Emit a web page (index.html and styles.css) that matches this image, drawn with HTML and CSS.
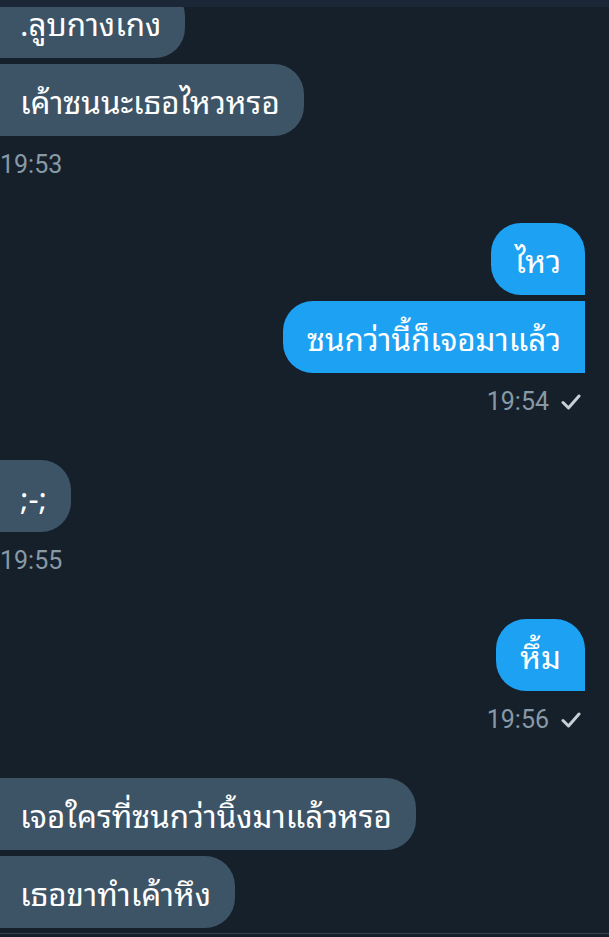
FILE: index.html
```html
<!DOCTYPE html>
<html lang="th">
<head>
<meta charset="utf-8">
<title>Messages</title>
<link rel="stylesheet" href="styles.css">
</head>
<body>
<div class="topbar"></div>
<main class="chat">
  <section class="group in first">
    <div class="bubble in-mid">.ลูบกางเกง</div>
    <div class="bubble in-last">เค้าซนนะเธอไหวหรอ</div>
    <div class="meta">19:53</div>
  </section>
  <section class="group out">
    <div class="bubble out-first">ไหว</div>
    <div class="bubble out-last">ซนกว่านี้ก็เจอมาแล้ว</div>
    <div class="meta">19:54 <svg class="check" viewBox="0 0 20 16" width="20" height="16"><path d="M2 8.5 L7.5 14 L18 2" fill="none" stroke="#c8cfd5" stroke-width="3" stroke-linecap="round" stroke-linejoin="round"/></svg></div>
  </section>
  <section class="group in">
    <div class="bubble in-single">;-;</div>
    <div class="meta">19:55</div>
  </section>
  <section class="group out">
    <div class="bubble out-single">หึ้ม</div>
    <div class="meta">19:56 <svg class="check" viewBox="0 0 20 16" width="20" height="16"><path d="M2 8.5 L7.5 14 L18 2" fill="none" stroke="#c8cfd5" stroke-width="3" stroke-linecap="round" stroke-linejoin="round"/></svg></div>
  </section>
  <section class="group in">
    <div class="bubble in-first">เจอใครที่ซนกว่านิ้งมาแล้วหรอ</div>
    <div class="bubble in-last">เธอขาทำเค้าหึง</div>
  </section>
</main>
<div class="bottomline"></div>
</body>
</html>
```
FILE: styles.css
```css
html, body {
  margin: 0;
  padding: 0;
  background: #15202b;
  width: 609px;
  height: 937px;
  overflow: hidden;
  font-family: Roboto, "Noto Sans Thai Looped", "Noto Sans Thai", sans-serif;
}
body { position: relative; }
.topbar {
  position: absolute;
  top: 0; left: 0; right: 0;
  height: 7px;
  background: #1b2736;
  z-index: 2;
}
.chat {
  display: flex;
  flex-direction: column;
  gap: 43px;
  margin-top: -14px;
  padding: 0 24px 0 0;
}
.group {
  display: flex;
  flex-direction: column;
  gap: 6px;
}
.group.in { align-items: flex-start; }
.group.out { align-items: flex-end; }
.bubble {
  height: 72px;
  box-sizing: border-box;
  display: flex;
  align-items: center;
  padding: 0 24px;
  font-family: "Noto Sans Thai Looped", "Noto Sans Thai", Roboto, sans-serif;
  font-size: 31.4px;
  line-height: 1.15;
  color: #ffffff;
  white-space: nowrap;
}
.group.in .bubble {
  background: #3d5466;
  margin-left: -4px;
}
.group.out .bubble { background: #1da1f2; }
.in-mid { border-radius: 0 30px 30px 0; }
.in-first { border-radius: 0 30px 30px 0; }
.in-last { border-radius: 0 30px 30px 0; }
.in-single { border-radius: 0 30px 30px 0; }
.out-first { border-radius: 30px 30px 0 30px; }
.out-last { border-radius: 30px 0 0 30px; }
.out-single { border-radius: 30px 30px 0 30px; }
.meta {
  margin-top: 8px;
  height: 30px;
  line-height: 30px;
  font-size: 25px;
  color: #8899a6;
  display: flex;
  align-items: center;
  gap: 12px;
}
.group.in .meta { margin-left: 0; }
.group.out .meta { margin-right: 4px; }
.check { display: block; }
.bottomline {
  position: absolute;
  left: 0; right: 0;
  top: 933px;
  height: 1px;
  background: #38444d;
}
```
